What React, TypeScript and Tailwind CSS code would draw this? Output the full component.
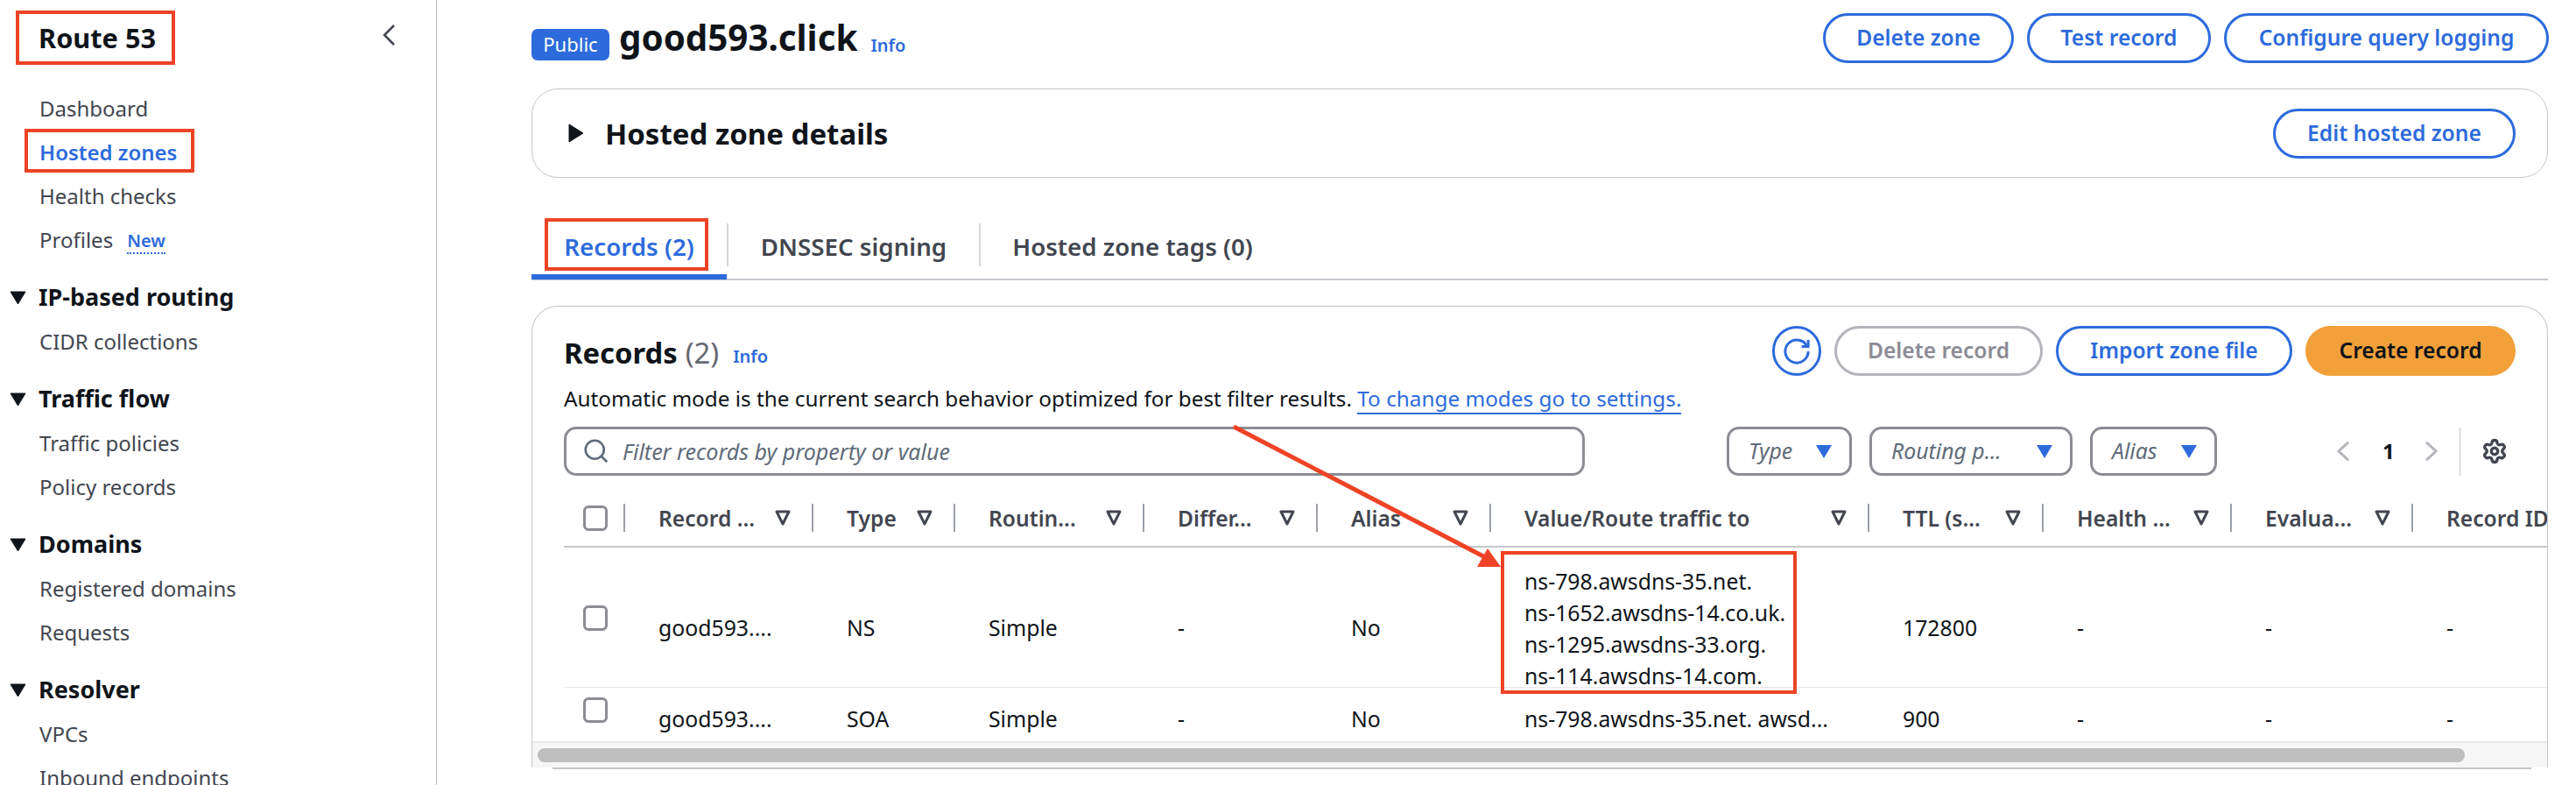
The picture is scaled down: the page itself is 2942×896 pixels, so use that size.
import { Settings } from 'lucide-react';

function NavItem({ label, active }: { label: string; active?: boolean }) {
  return (
    <div className={`flex h-[50px] items-center pl-[45px] text-[24px] ${active ? 'font-semibold text-[#2d6bdc]' : 'text-[#424650]'}`}>
      {label}
    </div>
  );
}

function NavGroup({ title, items }: { title: string; items: string[] }) {
  return (
    <div className="mt-[15px]">
      <div className="flex h-[51px] items-center text-[27px] font-bold text-[#0f141a]">
        <svg viewBox="0 0 19 16" className="ml-[11px] mr-[14px] h-[16px] w-[19px]">
          <path d="M1 1h17L9.5 15z" fill="#0f141a" stroke="#0f141a" strokeLinejoin="round" />
        </svg>
        {title}
      </div>
      {items.map((item) => (
        <NavItem key={item} label={item} />
      ))}
    </div>
  );
}

function Sidebar() {
  return (
    <aside className="h-[896px] w-[499px] shrink-0 overflow-hidden border-r border-[#b6bec9]">
      <div className="flex h-[99px] items-start justify-between pl-[44px] pr-[46px] pt-[21px]">
        <span className="text-[30.7px] font-bold leading-[44px] text-[#0f141a]">Route 53</span>
        <svg viewBox="0 0 16 24" className="mt-[7px] h-[24px] w-[16px]" fill="none" stroke="#424650" strokeWidth="2.6">
          <path d="M14 1 3 12l11 11" />
        </svg>
      </div>
      <NavItem label="Dashboard" />
      <NavItem label="Hosted zones" active />
      <NavItem label="Health checks" />
      <div className="flex h-[50px] items-center pl-[45px] text-[24px] text-[#424650]">
        Profiles
        <span className="ml-[16px] mt-[4px] border-b-2 border-dotted border-[#2d6bdc] text-[20px] font-semibold leading-[26px] text-[#2d6bdc]">New</span>
      </div>
      <NavGroup title="IP-based routing" items={['CIDR collections']} />
      <NavGroup title="Traffic flow" items={['Traffic policies', 'Policy records']} />
      <NavGroup title="Domains" items={['Registered domains', 'Requests']} />
      <NavGroup title="Resolver" items={['VPCs', 'Inbound endpoints']} />
    </aside>
  );
}

function OutlineButton({ label, width }: { label: string; width: string }) {
  return (
    <button className={`flex h-[57px] items-center justify-center rounded-full border-[3px] border-[#2d6bdc] bg-white text-[24.6px] font-semibold text-[#2d6bdc] ${width}`}>
      {label}
    </button>
  );
}

function SelectBox({ label, width }: { label: string; width: string }) {
  return (
    <div className={`flex h-[56px] items-center justify-between rounded-[14px] border-[3px] border-[#8c8c94] pl-[22px] pr-[20px] text-[24.8px] italic text-[#5f6b7a] ${width}`}>
      <span>{label}</span>
      <svg viewBox="0 0 18 15" className="h-[15px] w-[18px]">
        <path d="M0 0h18L9 15z" fill="#2d6bdc" />
      </svg>
    </div>
  );
}

function Checkbox() {
  return <div className="h-[29px] w-[28px] rounded-[6px] border-[3px] border-[#8c8c94] bg-white" />;
}

const columnTemplate = 'grid grid-cols-[70px_215px_162px_216px_198px_198px_432px_199px_215px_207px_153px]';

const headers = ['Record ...', 'Type', 'Routin...', 'Differ...', 'Alias', 'Value/Route traffic to', 'TTL (s...', 'Health ...', 'Evalua...', 'Record ID'];

function TableHeader() {
  return (
    <div className={`${columnTemplate} border-b-2 border-[#c6c6cd] pb-[16px] pt-[32px]`}>
      <div className="flex h-[32px] items-center border-r-2 border-[#9ba0a8] pl-[22px]">
        <Checkbox />
      </div>
      {headers.map((h, i) => (
        <div
          key={h}
          className={`flex h-[32px] items-center justify-between whitespace-nowrap pl-[38px] pr-[24px] text-[24.6px] font-semibold text-[#424650] ${i < headers.length - 1 ? 'border-r-2 border-[#9ba0a8]' : ''}`}
        >
          <span className="mt-[2px]">{h}</span>
          {i < headers.length - 1 && (
            <svg viewBox="0 0 18 18" className="h-[18px] w-[18px]" fill="none" stroke="#424650" strokeWidth="3" strokeLinejoin="round">
              <path d="M2 2h14L9 16z" />
            </svg>
          )}
        </div>
      ))}
    </div>
  );
}

function Cell({ children }: { children: React.ReactNode }) {
  return <div className="whitespace-nowrap pl-[38px] text-[24.8px] text-[#0f141a]">{children}</div>;
}

function Row({ cells, rowClass, boxClass }: { cells: React.ReactNode[]; rowClass: string; boxClass: string }) {
  return (
    <div className={`${columnTemplate} items-center ${rowClass}`}>
      <div className={`pl-[22px] ${boxClass}`}>
        <Checkbox />
      </div>
      {cells.map((c, i) => (
        <Cell key={i}>{c}</Cell>
      ))}
    </div>
  );
}

const nameServers = ['ns-798.awsdns-35.net.', 'ns-1652.awsdns-14.co.uk.', 'ns-1295.awsdns-33.org.', 'ns-114.awsdns-14.com.'];

function RecordsCard() {
  return (
    <section className="mt-[29px] w-[2303px] overflow-hidden rounded-t-[30px] border border-b-0 border-[#c6c6cd]">
      <div className="pt-[22px]">
        <div className="flex items-start justify-between pl-[36px] pr-[36px]">
          <div className="flex items-center pt-[9px]">
            <h2 className="text-[32.8px] font-bold leading-[44px] text-[#0f141a]">Records</h2>
            <span className="ml-[9px] text-[32.8px] leading-[44px] text-[#656871]">(2)</span>
            <span className="ml-[16px] mt-[8px] text-[20px] font-semibold text-[#2d6bdc]">Info</span>
          </div>
          <div className="flex gap-[15px]">
            <button className="flex h-[57px] w-[56px] items-center justify-center rounded-full border-[3px] border-[#2d6bdc]">
              <svg viewBox="0 0 16 16" className="h-[30px] w-[30px]" fill="none" stroke="#2d6bdc" strokeWidth="1.6">
                <path d="M15 8c0 3.87-3.13 7-7 7s-7-3.13-7-7 3.13-7 7-7c2.79 0 5.2 1.63 6.33 4" />
                <path d="M15 1v4h-4" />
              </svg>
            </button>
            <button className="flex h-[57px] w-[238px] items-center justify-center rounded-full border-[3px] border-[#b4b4bb] text-[24.6px] font-semibold text-[#8c8c94]">
              Delete record
            </button>
            <OutlineButton label="Import zone file" width="w-[270px]" />
            <button className="flex h-[57px] w-[240px] items-center justify-center rounded-full bg-[#f2a03a] text-[24.6px] font-semibold text-[#0f141a]">
              Create record
            </button>
          </div>
        </div>
        <p className="mt-[10px] pl-[36px] text-[24.3px] leading-[32px] text-[#0f141a]">
          Automatic mode is the current search behavior optimized for best filter results.{' '}
          <span className="border-b-2 border-[#2d6bdc] text-[#2d6bdc]">To change modes go to settings.</span>
        </p>
        <div className="mt-[16px] flex items-center pl-[36px]">
          <div className="flex h-[56px] w-[1166px] items-center rounded-[14px] border-[3px] border-[#8c8c94] pl-[20px] text-[25px] italic text-[#5f6b7a]">
            <svg viewBox="0 0 16 16" className="mr-[16px] h-[28px] w-[28px]" fill="none" stroke="#5f6b7a" strokeWidth="1.5">
              <circle cx="7" cy="7" r="6" />
              <path d="m11 11 4 4" />
            </svg>
            <span className="mt-[2px]">Filter records by property or value</span>
          </div>
          <div className="ml-[162px] flex gap-[20px]">
            <SelectBox label="Type" width="w-[143px]" />
            <SelectBox label="Routing p..." width="w-[232px]" />
            <SelectBox label="Alias" width="w-[145px]" />
          </div>
          <svg viewBox="0 0 16 24" className="ml-[136px] h-[24px] w-[15px]" fill="none" stroke="#b4b4bb" strokeWidth="3.2" strokeLinecap="round" strokeLinejoin="round">
            <path d="M14 2 3 12l11 10" />
          </svg>
          <span className="ml-[38px] text-[24px] font-bold text-[#0f141a]">1</span>
          <svg viewBox="0 0 16 24" className="ml-[35px] h-[24px] w-[15px]" fill="none" stroke="#b4b4bb" strokeWidth="3.2" strokeLinecap="round" strokeLinejoin="round">
            <path d="M2 2l11 10L2 22" />
          </svg>
          <div className="ml-[24px] h-[55px] w-px bg-[#c6c6cd]" />
          <Settings className="ml-[24px] h-[30px] w-[30px] text-[#424650]" strokeWidth={2.7} />
        </div>
        <div className="ml-[36px]">
          <TableHeader />
          <Row
            rowClass="h-[160px] border-b border-[#e5e7eb] pt-[20px]"
            boxClass="-mt-[23px]"
            cells={[
              'good593....',
              'NS',
              'Simple',
              '-',
              'No',
              <div key="ns" className="leading-[36px]">
                {nameServers.map((n) => (
                  <div key={n}>{n}</div>
                ))}
              </div>,
              '172800',
              '-',
              '-',
              '-',
            ]}
          />
          <Row
            rowClass="h-[61px] pt-[10px]"
            boxClass="-mt-[20px]"
            cells={['good593....', 'SOA', 'Simple', '-', 'No', 'ns-798.awsdns-35.net. awsd...', '900', '-', '-', '-']}
          />
        </div>
        <div className="h-[30px] border-t-2 border-[#e9ebed] bg-[#f6f6f6] py-[6px] pl-[6px]">
          <div className="h-[16px] w-[2201px] rounded-full bg-[#bfbfbf]" />
        </div>
      </div>
    </section>
  );
}

function Annotations() {
  return (
    <>
      <div className="absolute left-[18px] top-[12px] h-[62px] w-[182px] border-[4px] border-[#ee4326]" />
      <div className="absolute left-[28px] top-[147px] h-[50px] w-[194px] border-[4px] border-[#ee4326]" />
      <div className="absolute left-[622px] top-[249px] h-[60px] w-[187px] border-[4px] border-[#ee4326]" />
      <div className="absolute left-[1714px] top-[629px] h-[163px] w-[338px] border-[4px] border-[#ee4326]" />
      <svg className="absolute left-[1400px] top-[480px] h-[180px] w-[320px]" viewBox="0 0 320 180">
        <path d="M9 7 298 157" stroke="#ee4326" strokeWidth="5" />
        <path d="M314 167 287 167 299 146z" fill="#ee4326" />
      </svg>
    </>
  );
}

export default function App() {
  return (
    <div className="relative flex h-[896px] w-[2942px] overflow-hidden bg-white font-['Noto_Sans',sans-serif]">
      <Sidebar />
      <main className="min-w-0 flex-1 pl-[108px] pr-[31px] pt-[15px]">
        <div className="flex items-start justify-between">
          <div className="flex items-center">
            <span className="mt-[15px] flex h-[36px] w-[89px] items-center justify-center rounded-[7px] bg-[#2d6bdc] text-[22px] text-white">Public</span>
            <h1 className="ml-[11px] text-[40.3px] font-bold leading-[56px] text-[#0f141a]">good593.click</h1>
            <span className="ml-[15px] mt-[18px] text-[20px] font-semibold text-[#2d6bdc]">Info</span>
          </div>
          <div className="flex gap-[15px]">
            <OutlineButton label="Delete zone" width="w-[218px]" />
            <OutlineButton label="Test record" width="w-[210px]" />
            <OutlineButton label="Configure query logging" width="w-[371px]" />
          </div>
        </div>
        <section className="mt-[29px] flex h-[102px] w-[2303px] items-center justify-between rounded-[30px] border border-[#c6c6cd] pl-[41px] pr-[36px]">
          <div className="flex items-center">
            <svg viewBox="0 0 18 22" className="h-[22px] w-[18px]">
              <path d="M1 1v20l16-10z" fill="#0f141a" stroke="#0f141a" strokeLinejoin="round" />
            </svg>
            <h2 className="ml-[24px] mt-[2px] text-[33px] font-bold text-[#0f141a]">Hosted zone details</h2>
          </div>
          <OutlineButton label="Edit hosted zone" width="w-[277px]" />
        </section>
        <div className="mt-[46px] flex h-[71px] w-[2303px] items-start border-b-2 border-[#c6c6cd] text-[27.7px] font-semibold">
          <div className="flex h-[70px] w-[223px] items-start justify-center border-b-[6px] border-[#2d6bdc] pt-[12px] text-[#2d6bdc]">Records (2)</div>
          <div className="mt-[6px] flex h-[49px] w-[288px] items-center justify-center border-l-2 border-[#d5d7dc] pt-[4px] text-[#424650]">DNSSEC signing</div>
          <div className="mt-[6px] flex h-[49px] w-[349px] items-center justify-center border-l-2 border-[#d5d7dc] pt-[4px] text-[#424650]">Hosted zone tags (0)</div>
        </div>
        <RecordsCard />
        <div className="mx-[24px] h-[2px] w-[2260px] bg-[#c6c6cd]" />
      </main>
      <Annotations />
    </div>
  );
}
